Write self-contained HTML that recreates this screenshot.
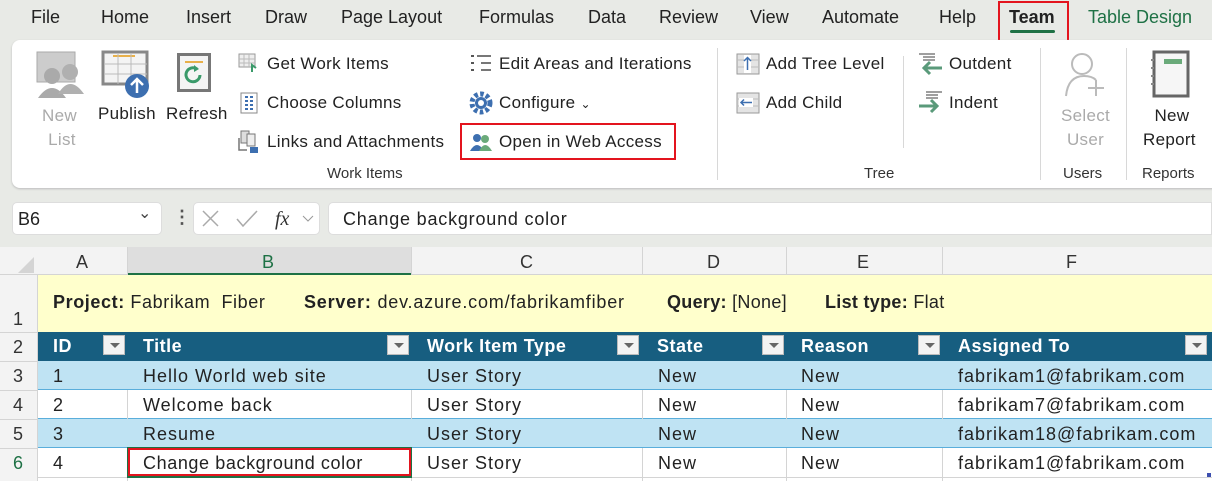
<!DOCTYPE html>
<html><head><meta charset="utf-8"><style>
*{margin:0;padding:0;box-sizing:border-box}
body{width:1212px;height:481px;overflow:hidden;background:#e8eae6;font-family:"Liberation Sans",sans-serif;position:relative;color:#222}
.a{position:absolute;white-space:nowrap}
.tab{position:absolute;top:7px;font-size:18px;color:#222}
.rb{font-size:17px;color:#222;letter-spacing:0.3px}
.gl{font-size:15px;color:#333}
.sep{position:absolute;width:1px;background:#d8d8d8}
.cell{position:absolute;font-size:18px;white-space:nowrap;letter-spacing:1px}
.hd{letter-spacing:0.5px}
.hl{position:absolute;background:#d4d4d4}
.dd{position:absolute;width:22px;height:20px;background:#f3f3f3;border:1px solid #bbb}
.dd:after{content:"";position:absolute;left:6px;top:7px;border-left:5px solid transparent;border-right:5px solid transparent;border-top:5px solid #666}
</style></head><body>
<div class="tab" style="left:31px">File</div>
<div class="tab" style="left:101px">Home</div>
<div class="tab" style="left:186px">Insert</div>
<div class="tab" style="left:265px">Draw</div>
<div class="tab" style="left:341px">Page Layout</div>
<div class="tab" style="left:479px">Formulas</div>
<div class="tab" style="left:588px">Data</div>
<div class="tab" style="left:659px">Review</div>
<div class="tab" style="left:750px">View</div>
<div class="tab" style="left:822px">Automate</div>
<div class="tab" style="left:939px">Help</div>
<div class="tab" style="left:1009px;font-weight:bold">Team</div>
<div class="tab" style="left:1088px;color:#1e7145">Table Design</div>
<div class="a" style="left:1010px;top:30px;width:45px;height:3px;background:#1e7145;border-radius:2px"></div>
<div class="a" style="left:998px;top:1px;width:71px;height:42px;border:2px solid #e3141e"></div>
<div class="a" style="left:12px;top:40px;width:1210px;height:148px;background:#fff;border-radius:8px;box-shadow:0 1px 2px #bbb"></div>
<svg class="a" style="left:36px;top:50px" width="50" height="50"><rect x="1" y="2" width="38" height="30" fill="#ccc" stroke="#aaa"/><circle cx="16" cy="26" r="8" fill="#aaa"/><path d="M2 48 q14-20 28 0z" fill="#aaa"/><circle cx="34" cy="22" r="8" fill="#b0b0b0"/><path d="M22 44 q12-20 26 0z" fill="#b0b0b0"/></svg>
<div class="a rb" style="left:42px;top:104px;color:#aaa;text-align:center;line-height:24px">New<br>&nbsp;List</div>
<svg class="a" style="left:101px;top:50px" width="52" height="50"><rect x="2" y="2" width="44" height="32" fill="#f4f4f4" stroke="#888" stroke-width="3"/><line x1="12" y1="6" x2="34" y2="6" stroke="#e8b04a" stroke-width="2"/><path d="M4 14h42M4 24h42M17 4v30M30 4v30" stroke="#bbb"/><circle cx="36" cy="36" r="12" fill="#3d6fb0"/><path d="M36 43v-13M30 35l6-6 6 6" stroke="#fff" stroke-width="2.5" fill="none"/></svg>
<div class="a rb" style="left:98px;top:104px">Publish</div>
<svg class="a" style="left:177px;top:53px" width="34" height="40"><rect x="1.5" y="1.5" width="31" height="36" fill="#f4f4f4" stroke="#777" stroke-width="3"/><line x1="8" y1="9" x2="26" y2="9" stroke="#e8b04a" stroke-width="2"/><path d="M23 22a7 7 0 1 1-3-6" stroke="#3a9a6a" stroke-width="3" fill="none"/><path d="M17 12l5 4-5 3z" fill="#3a9a6a"/></svg>
<div class="a rb" style="left:166px;top:104px">Refresh</div>
<svg class="a" style="left:238px;top:53px" width="22" height="20"><rect x="1" y="1" width="16" height="13" fill="#eee" stroke="#999"/><path d="M1 6h16M1 10h16M6 1v13M11 1v13" stroke="#bbb"/><path d="M14 19v-7l4 3" stroke="#3a9a6a" stroke-width="2" fill="none"/></svg>
<div class="a rb" style="left:267px;top:54px">Get Work Items</div>
<svg class="a" style="left:240px;top:92px" width="20" height="22"><rect x="1" y="1" width="16" height="20" fill="#fff" stroke="#888"/><path d="M5 5h3M10 5h3M5 9h3M10 9h3M5 13h3M10 13h3M5 17h3M10 17h3" stroke="#3d6fb0" stroke-width="2"/></svg>
<div class="a rb" style="left:267px;top:93px">Choose Columns</div>
<svg class="a" style="left:237px;top:130px" width="24" height="24"><rect x="4" y="1" width="8" height="12" fill="#ddd" stroke="#777"/><rect x="10" y="4" width="8" height="12" fill="#eee" stroke="#777"/><path d="M2 8v12h8" stroke="#777" fill="none" stroke-width="1.5"/><rect x="13" y="17" width="8" height="6" fill="#3d6fb0"/></svg>
<div class="a rb" style="left:267px;top:132px">Links and Attachments</div>
<svg class="a" style="left:470px;top:54px" width="22" height="20"><path d="M1 2h3M1 9h3M1 16h3" stroke="#555" stroke-width="2"/><path d="M7 2h14M11 9h10M11 16h10" stroke="#777" stroke-width="2"/></svg>
<div class="a rb" style="left:499px;top:54px">Edit Areas and Iterations</div>
<svg class="a" style="left:469px;top:91px" width="24" height="24"><circle cx="12" cy="12" r="9" fill="none" stroke="#3d6fb0" stroke-width="5" stroke-dasharray="3.5 2.4"/><circle cx="12" cy="12" r="6" fill="#3d6fb0"/><circle cx="12" cy="12" r="3" fill="#fff"/></svg>
<div class="a rb" style="left:499px;top:93px">Configure <span style="font-size:12px">&#8964;</span></div>
<svg class="a" style="left:469px;top:131px" width="24" height="22"><circle cx="8" cy="7" r="4" fill="#3d6fb0"/><path d="M1 20q7-12 14 0z" fill="#3d6fb0"/><circle cx="16" cy="8" r="4" fill="#6aaa7a"/><path d="M10 20q6-12 13 0z" fill="#6aaa7a"/></svg>
<div class="a rb" style="left:499px;top:132px">Open in Web Access</div>
<div class="a" style="left:460px;top:123px;width:216px;height:37px;border:2px solid #e3141e"></div>
<div class="a gl" style="left:327px;top:165px">Work Items</div>
<div class="sep" style="left:717px;top:48px;height:132px"></div>
<svg class="a" style="left:736px;top:53px" width="24" height="22"><rect x="1" y="1" width="22" height="20" fill="#e4e4e4" stroke="#999"/><path d="M1 7h22M1 14h22" stroke="#bbb"/><rect x="8" y="2" width="7" height="18" fill="#fff"/><path d="M11.5 17v-12M8 8l3.5-3.5 3.5 3.5" stroke="#3d6fb0" stroke-width="1.5" fill="none"/></svg>
<div class="a rb" style="left:766px;top:54px">Add Tree Level</div>
<svg class="a" style="left:736px;top:92px" width="24" height="22"><rect x="1" y="1" width="22" height="20" fill="#e4e4e4" stroke="#999"/><path d="M1 7h22M1 14h22" stroke="#bbb"/><rect x="3" y="6" width="14" height="9" fill="#fff"/><path d="M16 10.5h-11M8 7.5l-3 3 3 3" stroke="#3d6fb0" stroke-width="1.5" fill="none"/></svg>
<div class="a rb" style="left:766px;top:93px">Add Child</div>
<div class="sep" style="left:903px;top:56px;height:92px"></div>
<svg class="a" style="left:918px;top:52px" width="26" height="24"><path d="M1 2h16M5 5h12M5 8h12" stroke="#666" stroke-width="1.3"/><path d="M24 16h-18M12 10l-6 6 6 6" stroke="#5a9a7a" stroke-width="3" fill="none"/></svg>
<div class="a rb" style="left:949px;top:54px">Outdent</div>
<svg class="a" style="left:918px;top:90px" width="26" height="24"><path d="M8 2h16M8 5h12M8 8h12" stroke="#666" stroke-width="1.3"/><path d="M1 16h18M13 10l6 6-6 6" stroke="#5a9a7a" stroke-width="3" fill="none"/></svg>
<div class="a rb" style="left:949px;top:93px">Indent</div>
<div class="a gl" style="left:864px;top:165px">Tree</div>
<div class="sep" style="left:1040px;top:48px;height:132px"></div>
<svg class="a" style="left:1064px;top:50px" width="46" height="48"><circle cx="18" cy="14" r="10" fill="none" stroke="#bbb" stroke-width="2"/><path d="M2 46q2-20 18-20 8 0 12 4" fill="none" stroke="#bbb" stroke-width="2"/><path d="M32 30v16M24 38h16" stroke="#bbb" stroke-width="2"/></svg>
<div class="a rb" style="left:1061px;top:104px;color:#aaa;text-align:center;line-height:24px">Select<br>User</div>
<div class="a gl" style="left:1063px;top:165px">Users</div>
<div class="sep" style="left:1126px;top:48px;height:132px"></div>
<svg class="a" style="left:1150px;top:50px" width="42" height="48"><rect x="4" y="2" width="34" height="44" fill="#f6f6f6" stroke="#666" stroke-width="3"/><rect x="14" y="9" width="18" height="5" fill="#6aaa7a"/><path d="M4 10h-3M4 18h-3M4 26h-3M4 34h-3" stroke="#888" stroke-width="2"/></svg>
<div class="a rb" style="left:1143px;top:104px;text-align:center;line-height:24px">&nbsp;New<br>Report</div>
<div class="a gl" style="left:1142px;top:165px">Reports</div>
<div class="a" style="left:12px;top:202px;width:150px;height:33px;background:#fff;border:1px solid #ddd;border-radius:5px"></div>
<div class="a" style="left:18px;top:209px;font-size:18px">B6</div>
<div class="a" style="left:138px;top:203px;font-size:16px;color:#444">&#8964;</div>
<div class="a" style="left:173px;top:207px;font-size:18px;color:#555;font-weight:bold">&#8942;</div>
<div class="a" style="left:193px;top:202px;width:127px;height:33px;background:#fff;border:1px solid #ddd;border-radius:5px"></div>
<svg class="a" style="left:200px;top:208px" width="120" height="22"><path d="M3 3l15 15M18 3l-15 15" stroke="#aaa" stroke-width="1.5"/><path d="M37 11l6 7 14-15" stroke="#aaa" stroke-width="1.5" fill="none"/><text x="75" y="17" font-family="Liberation Serif" font-style="italic" font-size="20" fill="#333">fx</text><path d="M103 8l5 5 5-5" stroke="#999" fill="none"/></svg>
<div class="a" style="left:328px;top:202px;width:884px;height:33px;background:#fff;border:1px solid #ddd;border-radius:5px 0 0 5px"></div>
<div class="a" style="left:343px;top:209px;font-size:18px;letter-spacing:0.8px">Change background color</div>
<div class="a" style="left:0;top:247px;width:1212px;height:234px;background:#fff"></div>
<div class="a" style="left:0;top:247px;width:1212px;height:28px;background:#f3f3f3;border-bottom:1px solid #d4d4d4"></div>
<div class="a" style="left:127px;top:247px;width:284px;height:28px;background:#dedede;border-bottom:2px solid #1e7145"></div>
<svg class="a" style="left:14px;top:255px" width="22" height="20"><path d="M20 2v16h-16z" fill="#d4d4d4"/></svg>
<div class="a" style="left:0;top:275px;width:38px;height:206px;background:#f3f3f3;border-right:1px solid #d4d4d4"></div>
<div class="cell" style="left:76px;top:252px;color:#333">A</div>
<div class="cell" style="left:262px;top:252px;color:#1e7145">B</div>
<div class="cell" style="left:520px;top:252px;color:#333">C</div>
<div class="cell" style="left:707px;top:252px;color:#333">D</div>
<div class="cell" style="left:857px;top:252px;color:#333">E</div>
<div class="cell" style="left:1066px;top:252px;color:#333">F</div>
<div class="hl" style="left:127px;top:247px;width:1px;height:28px"></div>
<div class="hl" style="left:411px;top:247px;width:1px;height:28px"></div>
<div class="hl" style="left:642px;top:247px;width:1px;height:28px"></div>
<div class="hl" style="left:786px;top:247px;width:1px;height:28px"></div>
<div class="hl" style="left:942px;top:247px;width:1px;height:28px"></div>
<div class="a" style="left:38px;top:275px;width:1174px;height:57px;background:#ffffcc"></div>
<div class="cell" style="left:53px;top:292px;font-size:18px;letter-spacing:0.6px"><b>Project:</b> Fabrikam &nbsp;Fiber</div>
<div class="cell" style="left:304px;top:292px;font-size:18px;letter-spacing:0.8px"><b>Server:</b> dev.azure.com/fabrikamfiber</div>
<div class="cell" style="left:667px;top:292px;font-size:18px;letter-spacing:0.3px"><b>Query:</b> [None]</div>
<div class="cell" style="left:825px;top:292px;font-size:18px;letter-spacing:0.3px"><b>List type:</b> Flat</div>
<div class="a" style="left:38px;top:332px;width:1174px;height:29px;background:#175e80"></div>
<div class="cell hd" style="left:53px;top:336px;color:#fff;font-weight:bold">ID</div>
<div class="cell hd" style="left:143px;top:336px;color:#fff;font-weight:bold">Title</div>
<div class="cell hd" style="left:427px;top:336px;color:#fff;font-weight:bold">Work Item Type</div>
<div class="cell hd" style="left:657px;top:336px;color:#fff;font-weight:bold">State</div>
<div class="cell hd" style="left:801px;top:336px;color:#fff;font-weight:bold">Reason</div>
<div class="cell hd" style="left:958px;top:336px;color:#fff;font-weight:bold">Assigned To</div>
<div class="dd" style="left:103px;top:335px"></div>
<div class="dd" style="left:387px;top:335px"></div>
<div class="dd" style="left:617px;top:335px"></div>
<div class="dd" style="left:762px;top:335px"></div>
<div class="dd" style="left:918px;top:335px"></div>
<div class="dd" style="left:1185px;top:335px"></div>
<div class="a" style="left:38px;top:361px;width:1174px;height:29px;background:#bfe3f3;border-bottom:1px solid #5aaedb"></div>
<div class="a" style="left:38px;top:390px;width:1174px;height:29px;background:#fff;border-bottom:1px solid #5aaedb"></div>
<div class="a" style="left:38px;top:419px;width:1174px;height:29px;background:#bfe3f3;border-bottom:1px solid #5aaedb"></div>
<div class="hl" style="left:127px;top:390px;width:1px;height:29px"></div>
<div class="hl" style="left:411px;top:390px;width:1px;height:29px"></div>
<div class="hl" style="left:642px;top:390px;width:1px;height:29px"></div>
<div class="hl" style="left:786px;top:390px;width:1px;height:29px"></div>
<div class="hl" style="left:942px;top:390px;width:1px;height:29px"></div>
<div class="hl" style="left:127px;top:448px;width:1px;height:33px"></div>
<div class="hl" style="left:411px;top:448px;width:1px;height:33px"></div>
<div class="hl" style="left:642px;top:448px;width:1px;height:33px"></div>
<div class="hl" style="left:786px;top:448px;width:1px;height:33px"></div>
<div class="hl" style="left:942px;top:448px;width:1px;height:33px"></div>
<div class="a" style="left:38px;top:477px;width:1174px;height:1px;background:#d4d4d4"></div>
<div class="hl" style="left:0;top:332px;width:38px;height:1px"></div>
<div class="hl" style="left:0;top:361px;width:38px;height:1px"></div>
<div class="hl" style="left:0;top:390px;width:38px;height:1px"></div>
<div class="hl" style="left:0;top:419px;width:38px;height:1px"></div>
<div class="hl" style="left:0;top:448px;width:38px;height:1px"></div>
<div class="cell" style="left:13px;top:309px;color:#333">1</div>
<div class="cell" style="left:13px;top:337px;color:#333">2</div>
<div class="cell" style="left:13px;top:366px;color:#333">3</div>
<div class="cell" style="left:13px;top:395px;color:#333">4</div>
<div class="cell" style="left:13px;top:424px;color:#333">5</div>
<div class="cell" style="left:13px;top:453px;color:#1e7145">6</div>
<div class="cell" style="left:53px;top:366px">1</div><div class="cell" style="left:143px;top:366px">Hello World web site</div><div class="cell" style="left:427px;top:366px">User Story</div><div class="cell" style="left:658px;top:366px">New</div><div class="cell" style="left:801px;top:366px">New</div><div class="cell" style="left:958px;top:366px">fabrikam1@fabrikam.com</div>
<div class="cell" style="left:53px;top:395px">2</div><div class="cell" style="left:143px;top:395px">Welcome back</div><div class="cell" style="left:427px;top:395px">User Story</div><div class="cell" style="left:658px;top:395px">New</div><div class="cell" style="left:801px;top:395px">New</div><div class="cell" style="left:958px;top:395px">fabrikam7@fabrikam.com</div>
<div class="cell" style="left:53px;top:424px">3</div><div class="cell" style="left:143px;top:424px">Resume</div><div class="cell" style="left:427px;top:424px">User Story</div><div class="cell" style="left:658px;top:424px">New</div><div class="cell" style="left:801px;top:424px">New</div><div class="cell" style="left:958px;top:424px">fabrikam18@fabrikam.com</div>
<div class="cell" style="left:53px;top:453px">4</div><div class="cell" style="left:143px;top:453px;letter-spacing:0.6px">Change background color</div><div class="cell" style="left:427px;top:453px">User Story</div><div class="cell" style="left:658px;top:453px">New</div><div class="cell" style="left:801px;top:453px">New</div><div class="cell" style="left:958px;top:453px">fabrikam1@fabrikam.com</div>
<div class="a" style="left:127px;top:447px;width:285px;height:31px;border:2px solid #1e7145"></div>
<div class="a" style="left:128px;top:448px;width:283px;height:28px;border:2px solid #e3141e"></div>
<div class="a" style="left:1207px;top:473px;width:4px;height:4px;background:#3d4faf"></div>
</body></html>
